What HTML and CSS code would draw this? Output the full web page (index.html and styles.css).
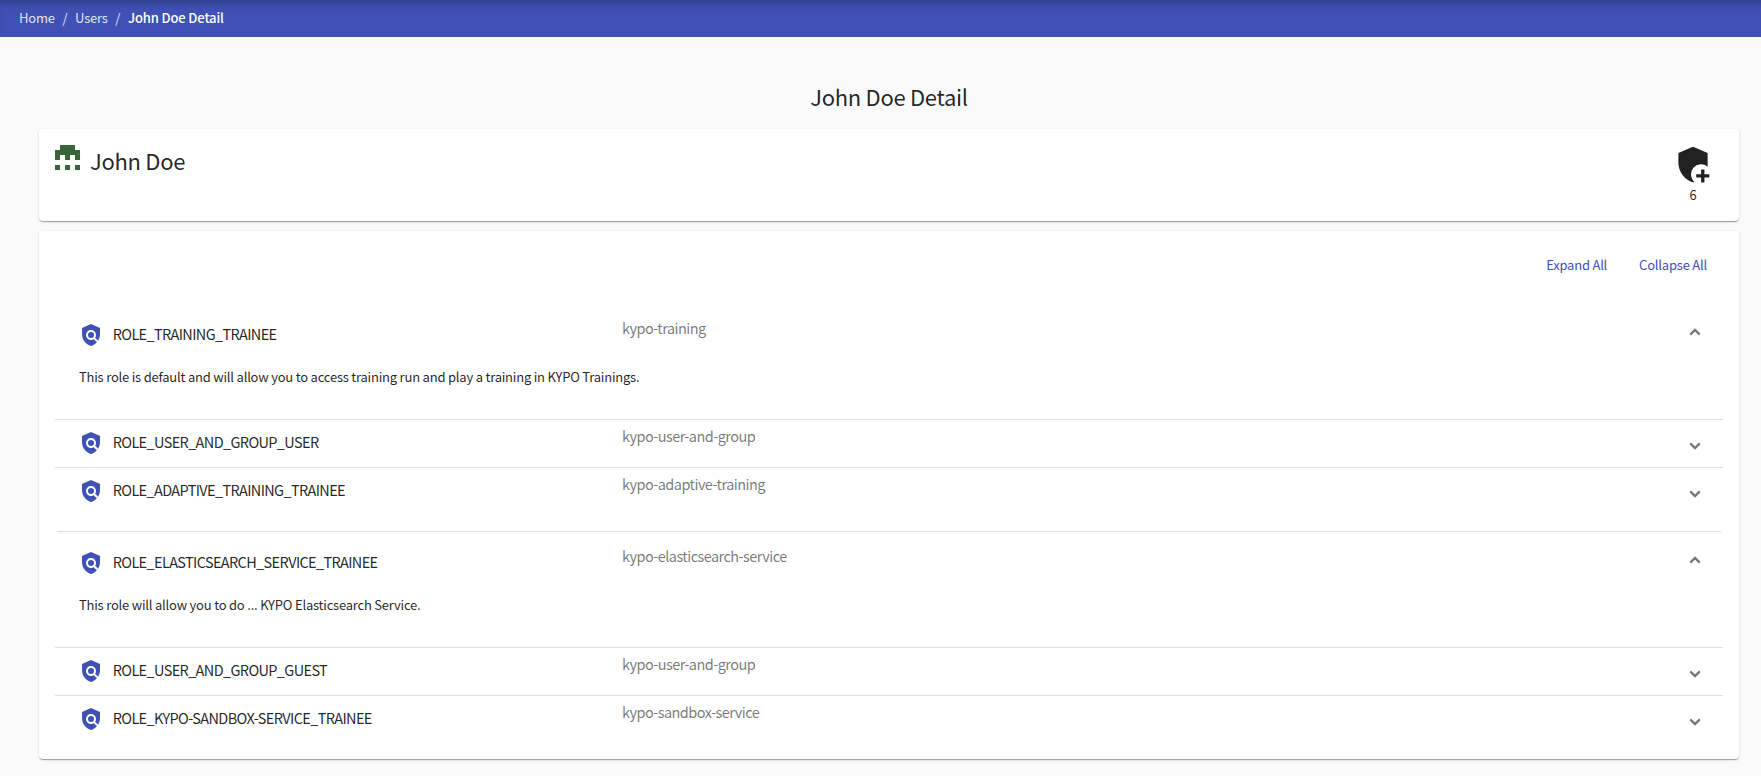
FILE: index.html
```html
<!DOCTYPE html>
<html lang="en">
<head>
<meta charset="utf-8">
<title>John Doe Detail</title>
<link rel="stylesheet" href="styles.css">
</head>
<body>
<svg class="sprite" aria-hidden="true">
  <symbol id="policy" viewBox="0 0 24 24"><path d="M21 5l-9-4-9 4v6c0 5.550 3.840 10.740 9 12 2.300-.56 4.330-1.900 5.880-3.710l-3.120-3.120c-1.940 1.290-4.580 1.070-6.290-.64-1.950-1.950-1.950-5.120 0-7.070 1.950-1.950 5.120-1.950 7.070 0 1.710 1.710 1.920 4.350.64 6.290l2.900 2.900C20.290 15.690 21 13.380 21 11V5z"/><circle cx="12" cy="12" r="3"/></symbol>
  <symbol id="chevron" viewBox="0 0 12 8"><path d="M1.300 1.400L6 6.100l4.700-4.700" fill="none" stroke="currentColor" stroke-width="2.200"/></symbol>
</svg>
<nav class="breadcrumb"><a>Home</a><span class="sep">/</span><a>Users</a><span class="sep">/</span><b>John Doe Detail</b></nav>
<main class="content">
  <h1 class="page-title">John Doe Detail</h1>
  <section class="card user-card">
    <svg class="identicon" viewBox="0 0 5 5" shape-rendering="crispEdges"><path d="M1 0h3v1h1v2h-1v-1h-1v1h-1v-1h-1v1h-1v-2h1zM0 4h1v1h-1zM2 4h1v1h-1zM4 4h1v1h-1z"/></svg>
    <h2 class="user-name">John Doe</h2>
    <div class="role-count">
      <svg class="shield" viewBox="0 0 40 40"><path d="M20 1.700L35 8.300V22.200A10.200 10.200 0 0 0 21.500 37.900L20 38.300C11.400 36.200 5 27.500 5 18.300V8.300z"/><path d="M28.300 25h3.400v5h5v3.400h-5v5h-3.400v-5h-5V30h5z"/></svg>
      <span>6</span>
    </div>
  </section>
  <section class="card roles-card">
    <div class="actions"><a>Expand All</a><a>Collapse All</a></div>
    <div class="accordion">
      <article class="panel open">
        <header><svg class="policy"><use href="#policy"/></svg><span class="role">ROLE_TRAINING_TRAINEE</span><span class="service">kypo-training</span><svg class="chevron"><use href="#chevron"/></svg></header>
        <p>This role is default and will allow you to access training run and play a training in KYPO Trainings.</p>
      </article>
      <article class="panel">
        <header><svg class="policy"><use href="#policy"/></svg><span class="role">ROLE_USER_AND_GROUP_USER</span><span class="service">kypo-user-and-group</span><svg class="chevron"><use href="#chevron"/></svg></header>
      </article>
      <article class="panel">
        <header><svg class="policy"><use href="#policy"/></svg><span class="role">ROLE_ADAPTIVE_TRAINING_TRAINEE</span><span class="service">kypo-adaptive-training</span><svg class="chevron"><use href="#chevron"/></svg></header>
      </article>
      <article class="panel open spaced">
        <header><svg class="policy"><use href="#policy"/></svg><span class="role">ROLE_ELASTICSEARCH_SERVICE_TRAINEE</span><span class="service">kypo-elasticsearch-service</span><svg class="chevron"><use href="#chevron"/></svg></header>
        <p>This role will allow you to do ... KYPO Elasticsearch Service.</p>
      </article>
      <article class="panel">
        <header><svg class="policy"><use href="#policy"/></svg><span class="role">ROLE_USER_AND_GROUP_GUEST</span><span class="service">kypo-user-and-group</span><svg class="chevron"><use href="#chevron"/></svg></header>
      </article>
      <article class="panel">
        <header><svg class="policy"><use href="#policy"/></svg><span class="role">ROLE_KYPO-SANDBOX-SERVICE_TRAINEE</span><span class="service">kypo-sandbox-service</span><svg class="chevron"><use href="#chevron"/></svg></header>
      </article>
    </div>
  </section>
</main>
</body>
</html>
```
FILE: styles.css
```css
* { box-sizing: border-box; }
body {
  margin: 0;
  height: 776px;
  overflow: hidden;
  background: #fafafa;
  color: rgba(0, 0, 0, .87);
  font: 400 13px/20px "Noto Sans CJK SC", "Noto Sans", sans-serif;
  letter-spacing: -.21px;
}
h1, h2, p { margin: 0; font-weight: 400; }
.sprite { display: none; }
.breadcrumb {
  display: flex;
  height: 37px;
  padding: 8px 19px 9px;
  background: #3f51b5;
  box-shadow: inset 0 8px 8px -6px rgba(0, 0, 0, .3);
  color: rgba(255, 255, 255, .87);
}
.breadcrumb b { color: #fff; font-weight: 500; letter-spacing: -.13px; }
.sep { margin: 0 7.700px; }
.content { padding: 45px 22px 0 39px; }
.page-title { height: 47px; font-size: 22px; line-height: 28px; letter-spacing: -.3px; text-align: center; }
.card {
  background: #fff;
  border-radius: 4px;
  box-shadow: 0 2px 1px -1px rgba(0, 0, 0, .2), 0 1px 1px rgba(0, 0, 0, .14), 0 1px 3px rgba(0, 0, 0, .12);
}
.user-card { display: flex; height: 92px; padding: 16px; }
.identicon { width: 25px; height: 25px; fill: #366539; }
.user-name { margin-left: 10px; font-size: 22px; line-height: 30px; letter-spacing: -.3px; }
.role-count { display: flex; flex-direction: column; align-items: center; width: 40px; margin: 0 10px 0 auto; }
.shield { width: 40px; height: 40px; fill: #212121; }
.role-count span { margin-top: 1px; }
.roles-card { height: 528px; margin-top: 10px; padding: 16px; }
.actions { display: flex; justify-content: flex-end; gap: 32px; height: 56px; padding: 8px 16px 0 0; color: #3f51b5; }
.panel {
  background: linear-gradient(#e0e0e0, #e0e0e0) center top / 100% 1px no-repeat;
}
.panel:first-child { background: none; }
.panel header {
  display: grid;
  grid-template-columns: 24px 519px 1fr 12px;
  align-items: center;
  height: 48px;
  padding: 0 22px 0 24px;
}
.open header { height: 64px; }
.open { height: 116px; }
.spaced { margin-top: 16px; background-size: calc(100% - 4px) 1px; }
.policy { width: 24px; height: 24px; fill: #3f51b5; }
.role { padding-left: 9.700px; font-size: 14.500px; letter-spacing: -.635px; transform: translateY(-1px); }
.service { color: rgba(0, 0, 0, .54); font-size: 14.500px; letter-spacing: -.55px; transform: translateY(-7px); }
.chevron { width: 12px; height: 8px; color: #757575; transform: translateY(3px); }
.open .chevron { transform: translateY(-3px) rotate(180deg); }
.panel p { padding-left: 24px; }
```
